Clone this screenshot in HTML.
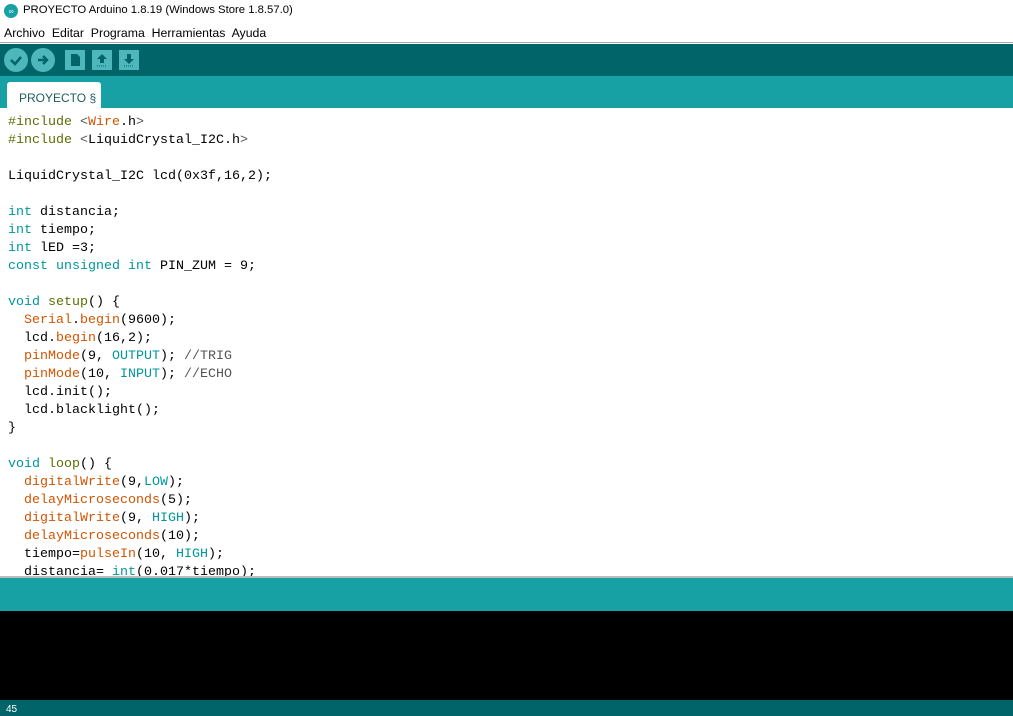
<!DOCTYPE html>
<html><head><style>
*{margin:0;padding:0;box-sizing:border-box}
body{width:1013px;height:716px;overflow:hidden;background:#fff;font-family:"Liberation Sans",sans-serif;position:relative}
.abs{position:absolute}
#title{top:0;left:0;width:1013px;height:22px;background:#fff;font-size:11.3px;color:#000}
#menu{top:22px;left:0;width:1013px;height:21px;background:#fff;font-size:12.3px;border-bottom:1px solid #aaa}
#tool{top:44px;left:0;width:1013px;height:32px;background:#006468}
#tabs{top:76px;left:0;width:1013px;height:32px;background:#17a1a5}
#tab{top:82px;left:7px;width:94px;height:26px;background:#fff;border-radius:3px 3px 0 0;font-size:12px;color:#1e5c60;padding:9px 0 0 12px}
#codewrap{top:108px;left:0;width:1013px;height:468px;overflow:hidden}
#code{top:6px;left:8px;font-family:"Liberation Mono",monospace;font-size:13.33px;line-height:18px;color:#000;white-space:pre}
.k{color:#5e6d03}.f{color:#d35400}.c{color:#00979c}.m{color:#555}
#div{top:576px;left:0;width:1013px;height:2px;background:#bbb}
#stat{top:578px;left:0;width:1013px;height:33px;background:#17a1a5}
#cons{top:611px;left:0;width:1013px;height:89px;background:#000}
#foot{top:700px;left:0;width:1013px;height:16px;background:#006468;color:#fff;font-size:10px;padding:4px 0 0 6px}
.circ{width:24px;height:24px;border-radius:50%;background:#4db7bb;top:48px}
.sq{width:20px;height:20px;background:#4db7bb;top:50px}
</style></head><body>
<div id="title" class="abs"><svg class="abs" style="left:4px;top:4px" width="14" height="14"><circle cx="7" cy="7" r="7" fill="#17a1a5"/><text x="7" y="9.5" font-size="7" fill="#fff" text-anchor="middle" font-family="Liberation Sans">∞</text></svg><span class="abs" style="left:23px;top:4px">PROYECTO Arduino 1.8.19 (Windows Store 1.8.57.0)</span></div>
<div id="menu" class="abs"><span class="abs" style="left:4px;top:4px">Archivo&nbsp; Editar&nbsp; Programa&nbsp; Herramientas&nbsp; Ayuda</span></div>
<div id="tool" class="abs"></div>
<div class="abs circ" style="left:4px"><svg width="24" height="24"><path d="M7 12l4 4 6-7" stroke="#006468" stroke-width="2.5" fill="none"/></svg></div>
<div class="abs circ" style="left:31px"><svg width="24" height="24"><path d="M7 12h9M12 8l4 4-4 4" stroke="#006468" stroke-width="2.5" fill="none"/></svg></div>
<div class="abs sq" style="left:65px"><svg width="20" height="20"><path d="M6 4h6l3 3v9H6z" fill="#006468"/></svg></div>
<div class="abs sq" style="left:92px"><svg width="20" height="20"><path d="M10 4l5 5h-3v4H8V9H5z" fill="#006468"/><path d="M5 16h10" stroke="#006468" stroke-dasharray="1 1"/></svg></div>
<div class="abs sq" style="left:119px"><svg width="20" height="20"><path d="M10 14l5-5h-3V4H8v5H5z" fill="#006468"/><path d="M5 16h10" stroke="#006468" stroke-dasharray="1 1"/></svg></div>
<div id="tabs" class="abs"></div>
<div id="tab" class="abs">PROYECTO §</div>
<div id="codewrap" class="abs"><div id="code" class="abs"><span class="k">#include</span> <span class="m">&lt;</span><span class="f">Wire</span>.h<span class="m">&gt;</span>
<span class="k">#include</span> <span class="m">&lt;</span>LiquidCrystal_I2C.h<span class="m">&gt;</span>

LiquidCrystal_I2C lcd(0x3f,16,2);

<span class="c">int</span> distancia;
<span class="c">int</span> tiempo;
<span class="c">int</span> lED =3;
<span class="c">const</span> <span class="c">unsigned</span> <span class="c">int</span> PIN_ZUM = 9;

<span class="c">void</span> <span class="k">setup</span>() {
  <span class="f">Serial</span>.<span class="f">begin</span>(9600);
  lcd.<span class="f">begin</span>(16,2);
  <span class="f">pinMode</span>(9, <span class="c">OUTPUT</span>); <span class="m">//TRIG</span>
  <span class="f">pinMode</span>(10, <span class="c">INPUT</span>); <span class="m">//ECHO</span>
  lcd.init();
  lcd.blacklight();
}

<span class="c">void</span> <span class="k">loop</span>() {
  <span class="f">digitalWrite</span>(9,<span class="c">LOW</span>);
  <span class="f">delayMicroseconds</span>(5);
  <span class="f">digitalWrite</span>(9, <span class="c">HIGH</span>);
  <span class="f">delayMicroseconds</span>(10);
  tiempo=<span class="f">pulseIn</span>(10, <span class="c">HIGH</span>);
  distancia= <span class="c">int</span>(0.017*tiempo);</div></div>
<div id="div" class="abs"></div>
<div id="stat" class="abs"></div>
<div id="cons" class="abs"></div>
<div id="foot" class="abs">45</div>
</body></html>
